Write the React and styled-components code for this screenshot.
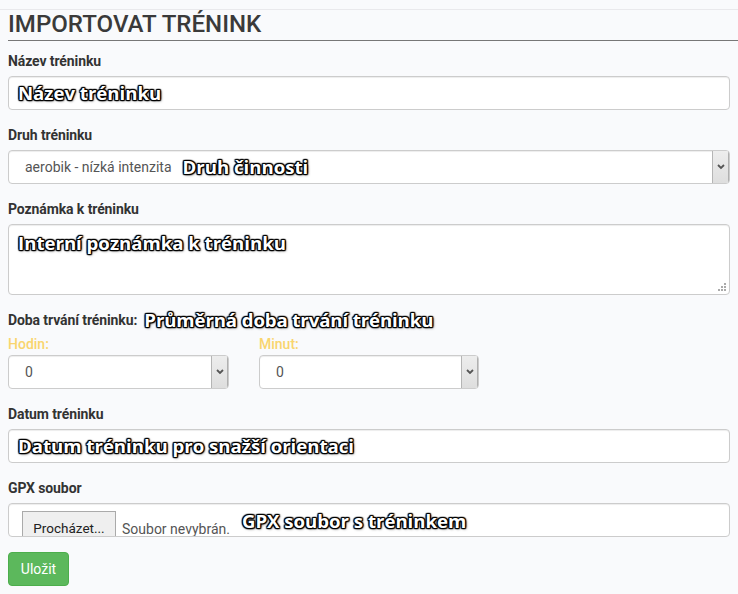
import React from 'react';
import styled, { createGlobalStyle } from 'styled-components';

const GlobalStyle = createGlobalStyle`
    html, body {
        margin: 0;
        padding: 0;
        background: #f9fafc;
    }
    body {
        font-family: Roboto, "Liberation Sans", sans-serif;
        color: #333;
    }
`
const Page = styled.div`
    width: 738px;
    height: 594px;
    box-sizing: border-box;
    overflow: hidden;
    padding: 9px 8px 0;
`
const TopLine = styled.div`
    height: 1px;
    margin: 0 -8px;
    background: #e9e9ec;
`
const Title = styled.h1`
    margin: 0 0 10px;
    height: 30px;
    line-height: 28px;
    font-size: 24.1px;
    font-weight: 500;
    color: #3a3a3a;
    text-transform: uppercase;
    border-bottom: 1px solid #777;
    width: 730px;
`
const Field = styled.div`
    margin-bottom: 15px;
`
const Label = styled.div`
    height: 20px;
    line-height: 22px;
    margin-bottom: 5px;
    font-size: 14px;
    font-weight: 700;
    letter-spacing: -0.1px;
    color: #333;
    white-space: nowrap;
    display: flex;
    align-items: center;
`
const Control = styled.div`
    box-sizing: border-box;
    width: ${(props) => props.width || '722px'};
    height: ${(props) => props.height || '34px'};
    background: #fff;
    border: 1px solid #ccc;
    border-radius: 4px;
    box-shadow: inset 0 1px 1px rgba(0, 0, 0, 0.075);
    position: relative;
    display: flex;
    align-items: ${(props) => props.top ? 'flex-start' : 'center'};
    overflow: hidden;
    font-size: 14px;
    color: #555;
`
const Note = styled.span`
    font-family: "Open Sans", "Noto Sans", sans-serif;
    font-size: 18.6px;
    font-weight: 700;
    line-height: 24px;
    color: #fff;
    white-space: nowrap;
    margin-left: ${(props) => props.gap || '0'};
    margin-top: ${(props) => props.drop || '0'};
    text-shadow:
        -1px -1px 1px #000, 1px -1px 1px #000, -1px 1px 1px #000, 1px 1px 1px #000,
        0 -1px 1px #000, 0 1px 1px #000, -1px 0 1px #000, 1px 0 1px #000,
        1px 1px 3px rgba(0, 0, 0, 0.6);
`
const InputNote = styled(Note)`
    margin-left: 9px;
    margin-top: ${(props) => props.top ? '6px' : '0'};
`
const SelectValue = styled.span`
    margin-left: 16px;
    font-size: 14px;
    color: #555;
`
const ArrowBox = styled.div`
    position: absolute;
    top: 0;
    right: 0;
    bottom: 0;
    width: 15px;
    border-left: 1px solid #b5b5b5;
    border-right: 1px solid #b0b0b0;
    background: linear-gradient(#ededed, #dedede);
    display: flex;
    align-items: center;
    justify-content: center;
`
const Resizer = styled.svg`
    position: absolute;
    right: 2px;
    bottom: 2px;
`
const Row = styled.div`
    display: flex;
    gap: 30px;
    margin-bottom: 15px;
`
const SubLabel = styled.div`
    height: 15px;
    line-height: 15px;
    margin: 2px 0 3px;
    font-size: 14px;
    font-weight: 500;
    color: #f9d56e;
`
const FileButton = styled.div`
    box-sizing: border-box;
    flex: none;
    width: 94px;
    height: 36px;
    margin: 7px 6px 0 13px;
    align-self: flex-start;
    background: #efefef;
    border: 1px solid #aaa;
    font-size: 13.5px;
    line-height: 32px;
    text-align: center;
    color: #222;
`
const FileText = styled.span`
    font-size: 14px;
    color: #555;
    margin-top: 18px;
    margin-right: 12px;
    white-space: nowrap;
`
const SaveButton = styled.button`
    display: block;
    width: 61px;
    height: 34px;
    padding: 0;
    background: #5cb85c;
    border: 1px solid #4cae4c;
    border-radius: 4px;
    color: #fff;
    font-family: Roboto, sans-serif;
    font-size: 14px;
`

const SelectArrow = () => (
    <ArrowBox>
        <svg width="8" height="6" viewBox="0 0 8 6">
            <path d="M1 1 L4 4 L7 1" fill="none" stroke="#555" strokeWidth="1.8" />
        </svg>
    </ArrowBox>
);

const Select = ({ width, value, note }) => (
    <Control width={width}>
        <SelectValue>{value}</SelectValue>
        {note && <Note gap="11px">{note}</Note>}
        <SelectArrow />
    </Control>
);

const App = () => {
    return (
        <Page>
            <GlobalStyle />
            <TopLine />
            <Title>Importovat trénink</Title>
            <Field>
                <Label>Název tréninku</Label>
                <Control><InputNote>Název tréninku</InputNote></Control>
            </Field>
            <Field>
                <Label>Druh tréninku</Label>
                <Select value="aerobik - nízká intenzita" note="Druh činnosti" />
            </Field>
            <Field>
                <Label>Poznámka k tréninku</Label>
                <Control height="71px" top="true">
                    <InputNote top="true">Interní poznámka k tréninku</InputNote>
                    <Resizer width="10" height="10" viewBox="0 0 10 10">
                        <g fill="#aaa">
                            <rect x="7" y="1" width="2" height="2" />
                            <rect x="4" y="4" width="2" height="2" />
                            <rect x="7" y="4" width="2" height="2" />
                            <rect x="1" y="7" width="2" height="2" />
                            <rect x="4" y="7" width="2" height="2" />
                            <rect x="7" y="7" width="2" height="2" />
                        </g>
                    </Resizer>
                </Control>
            </Field>
            <Label>Doba trvání tréninku:<Note gap="7px">Průměrná doba trvání tréninku</Note></Label>
            <Row>
                <div>
                    <SubLabel>Hodin:</SubLabel>
                    <Select width="221px" value="0" />
                </div>
                <div>
                    <SubLabel>Minut:</SubLabel>
                    <Select width="220px" value="0" />
                </div>
            </Row>
            <Field>
                <Label>Datum tréninku</Label>
                <Control><InputNote>Datum tréninku pro snažší orientaci</InputNote></Control>
            </Field>
            <Field>
                <Label>GPX soubor</Label>
                <Control>
                    <FileButton>Procházet...</FileButton>
                    <FileText>Soubor nevybrán.</FileText>
                    <Note drop="2px">GPX soubor s tréninkem</Note>
                </Control>
            </Field>
            <SaveButton>Uložit</SaveButton>
        </Page>
    );
};

export default App;
